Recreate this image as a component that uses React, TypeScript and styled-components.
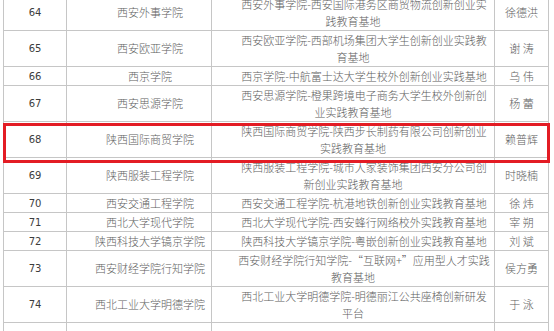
import styled, { createGlobalStyle } from "styled-components";

const GlobalStyle = createGlobalStyle`
  html, body {
    margin: 0;
    background: #fff;
  }
`;

const Page = styled.div`
  position: relative;
  width: 554px;
  height: 331px;
  overflow: hidden;
  padding-left: 3px;
  box-sizing: border-box;
  background: #fff;
`;

const Table = styled.table`
  width: 545px;
  margin-top: -6px;
  border-collapse: collapse;
  table-layout: fixed;
  font-family: "Noto Sans CJK SC", sans-serif;
  font-size: 11px;
  font-weight: 300;
  color: #5e5e5e;
`;

const Col = styled.col<{ $w: number }>`
  width: ${(p) => p.$w}px;
`;

const Row = styled.tr<{ $blank?: boolean }>`
  height: ${(p) => (p.$blank ? "37px" : "auto")};
`;

const Cell = styled.td<{ $indent?: boolean }>`
  border: 1px solid #c6c6c6;
  padding: 0.5px 3px;
  line-height: 17px;
  text-align: center;
  vertical-align: middle;
  text-indent: ${(p) => (p.$indent ? "2em" : "0")};
  word-break: break-all;
`;

const NumCell = styled(Cell)`
  font-family: "DejaVu Sans", "Noto Sans CJK SC", sans-serif;
  font-size: 10px;
  font-weight: 400;
  color: #3c3c3c;
`;

// red annotation frame drawn over row 68
const Highlight = styled.div`
  position: absolute;
  left: 3px;
  top: 123px;
  width: 547px;
  height: 40px;
  border: 3px solid #e31c24;
  box-sizing: border-box;
  pointer-events: none;
`;

const rows = [
  { no: 64, school: "西安外事学院", base: "西安外事学院-西安国际港务区商贸物流创新创业实践教育基地", lead: "徐德洪" },
  { no: 65, school: "西安欧亚学院", base: "西安欧亚学院-西部机场集团大学生创新创业实践教育基地", lead: "谢 涛" },
  { no: 66, school: "西京学院", base: "西京学院-中航富士达大学生校外创新创业实践基地", lead: "乌 伟" },
  { no: 67, school: "西安思源学院", base: "西安思源学院-橙果跨境电子商务大学生校外创新创业实践教育基地", lead: "杨 蕾" },
  { no: 68, school: "陕西国际商贸学院", base: "陕西国际商贸学院-陕西步长制药有限公司创新创业实践教育基地", lead: "赖普辉" },
  { no: 69, school: "陕西服装工程学院", base: "陕西服装工程学院-城市人家装饰集团西安分公司创新创业实践教育基地", lead: "时晓楠" },
  { no: 70, school: "西安交通工程学院", base: "西安交通工程学院-杭港地铁创新创业实践教育基地", lead: "徐 炜" },
  { no: 71, school: "西北大学现代学院", base: "西北大学现代学院-西安蜂行网络校外实践教育基地", lead: "宰 朔" },
  { no: 72, school: "陕西科技大学镐京学院", base: "陕西科技大学镐京学院-粤嵌创新创业实践教育基地", lead: "刘 斌" },
  { no: 73, school: "西安财经学院行知学院", base: "西安财经学院行知学院-“互联网+”应用型人才实践教育基地", lead: "侯方勇" },
  { no: 74, school: "西北工业大学明德学院", base: "西北工业大学明德学院-明德丽江公共座椅创新研发平台", lead: "于 泳" },
];

export default function App() {
  return (
    <>
      <GlobalStyle />
      <Page>
        <Table>
          <colgroup>
            <Col $w={63} />
            <Col $w={145} />
            <Col $w={283} />
            <Col $w={54} />
          </colgroup>
          <tbody>
            {rows.map((r) => (
              <Row key={r.no}>
                <NumCell>{r.no}</NumCell>
                <Cell $indent>{r.school}</Cell>
                <Cell $indent>{r.base}</Cell>
                <Cell>{r.lead}</Cell>
              </Row>
            ))}
            <Row $blank>
              <NumCell />
              <Cell />
              <Cell />
              <Cell />
            </Row>
          </tbody>
        </Table>
        <Highlight />
      </Page>
    </>
  );
}
